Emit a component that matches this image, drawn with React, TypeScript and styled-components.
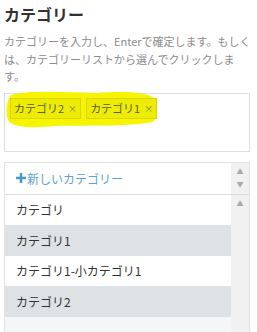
import React from 'react';
import styled, { createGlobalStyle } from 'styled-components';

const tags = ['カテゴリ2', 'カテゴリ1'];
const categories = ['カテゴリ', 'カテゴリ1', 'カテゴリ1-小カテゴリ1', 'カテゴリ2', ''];

function App() {
  return (
    <Page>
      <GlobalStyle />
      <Title>カテゴリー</Title>
      <Help>
        カテゴリーを入力し、Enterで確定します。もしく
        <br />
        は、カテゴリーリストから選んでクリックしま
        <br />
        す。
      </Help>
      <TagBox>
        <Marker viewBox='0 0 150 40' preserveAspectRatio='none'>
          <path
            d='M6 6 C20 1 60 3 90 4 C115 2 140 3 147 9 C151 18 150 28 146 33 C120 38 80 36 50 37 C30 39 12 39 4 33 C0 26 1 12 6 6 Z'
            fill='#f6f400'
          />
        </Marker>
        <TagRow>
          {tags.map((t) => (
            <Tag key={t}>
              {t}
              <Remove>×</Remove>
            </Tag>
          ))}
        </TagRow>
      </TagBox>
      <Select>
        <Header>
          <NewItem>
            <Plus viewBox='0 0 12 12'>
              <path d='M4.5 0h3v4.5H12v3H7.5V12h-3V7.5H0v-3h4.5z' fill='#3f9ccb' />
            </Plus>
            新しいカテゴリー
          </NewItem>
          <Scroll>
            <Arrow>▲</Arrow>
            <Arrow>▼</Arrow>
          </Scroll>
        </Header>
        <Body>
          <List>
            {categories.map((c, i) => (
              <Item key={i} tone={i === 4 ? 'last' : i % 2 ? 'gray' : 'white'}>
                {c}
              </Item>
            ))}
          </List>
          <Scroll>
            <Arrow>▲</Arrow>
          </Scroll>
        </Body>
      </Select>
    </Page>
  );
}

const GlobalStyle = createGlobalStyle`
  body {
    margin: 0;
    background: #fff;
    font-family: "Noto Sans CJK JP", "Noto Sans", sans-serif;
    overflow: hidden;
  }
`;

const Page = styled.div`
  padding: 3px 7px 0 4px;
  height: 332px;
  box-sizing: border-box;
  overflow: hidden;
`;

const Title = styled.h3`
  margin: 0;
  font-size: 16px;
  line-height: 22px;
  font-weight: 700;
  color: #333;
`;

const Help = styled.p`
  margin: 8px 0 0;
  font-size: 11px;
  line-height: 17.5px;
  color: #8c8c8c;
  white-space: nowrap;
`;

const TagBox = styled.div`
  position: relative;
  margin-top: 7px;
  height: 57px;
  border: 1px solid #dedede;
`;

const Marker = styled.svg`
  position: absolute;
  left: 0;
  top: -5px;
  width: 152px;
  height: 40px;
`;

const TagRow = styled.div`
  position: relative;
  display: flex;
  gap: 5px;
  padding: 4px 5px;
`;

const Tag = styled.span`
  display: inline-flex;
  align-items: center;
  height: 21px;
  padding: 0 3px 0 3px;
  box-sizing: border-box;
  border: 1px solid #d9d600;
  background: #eeec05;
  font-size: 11px;
  color: #5a5a2a;
`;

const Remove = styled.span`
  margin-left: 4px;
  font-size: 9px;
  color: #7a7a40;
`;

const Select = styled.div`
  margin-top: 10px;
  border: 1px solid #e2e2e2;
  border-bottom: none;
`;

const Header = styled.div`
  display: flex;
  height: 31px;
  border-bottom: 1px solid #dcdcdc;
`;

const NewItem = styled.div`
  flex: 1;
  display: flex;
  align-items: center;
  padding-left: 11px;
  font-size: 12px;
  color: #5aa3cf;
`;

const Plus = styled.svg`
  width: 10px;
  height: 10px;
  margin-right: 1px;
`;

const Scroll = styled.div`
  width: 18px;
  background: #f1f1f1;
  display: flex;
  flex-direction: column;
  align-items: center;
  padding-top: 3px;
  gap: 3px;
`;

const Arrow = styled.span`
  font-size: 7px;
  line-height: 10px;
  color: #a9a9a9;
`;

const Body = styled.div`
  display: flex;
`;

const List = styled.div`
  flex: 1;
`;

const Item = styled.div<{ tone: 'white' | 'gray' | 'last' }>`
  height: 30.5px;
  display: flex;
  align-items: center;
  padding-left: 11px;
  font-size: 12px;
  color: #333;
  background: ${(p) => (p.tone === 'gray' ? '#dee2e5' : p.tone === 'last' ? '#f4f6f8' : '#fff')};
`;

export default App;
